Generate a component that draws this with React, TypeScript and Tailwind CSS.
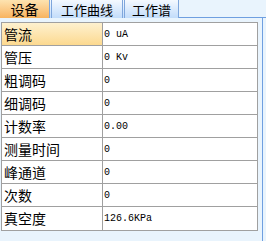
import React from "react";

const rows: [string, string][] = [
  ["管流", "0 uA"],
  ["管压", "0 Kv"],
  ["粗调码", "0"],
  ["细调码", "0"],
  ["计数率", "0.00"],
  ["测量时间", "0"],
  ["峰通道", "0"],
  ["次数", "0"],
  ["真空度", "126.6KPa"],
];

export default function App() {
  return (
    <div
      className="w-[266px] h-[241px] bg-[#e9f4fd] overflow-hidden flex flex-col"
      style={{ fontFamily: '"Noto Sans CJK SC", sans-serif' }}
    >
      <div className="flex h-[18px] shrink-0">
        <div className="w-[49px] h-[18px] bg-gradient-to-b from-[#fde3b0] to-[#f8b35e] flex items-center justify-center text-[14px] text-black leading-none">
          设备
        </div>
        <div className="w-[73px] h-[18px] border-l-[3px] border-double border-[#7ea6dc] bg-gradient-to-b from-[#f4f9ff] to-[#c2dcfa] flex items-center justify-center text-[13px] text-black leading-none">
          工作曲线
        </div>
        <div className="w-[57px] h-[18px] border-l-[3px] border-r border-double border-[#7ea6dc] bg-gradient-to-b from-[#f4f9ff] to-[#c2dcfa] flex items-center justify-center text-[13px] text-black leading-none">
          工作谱
        </div>
        <div className="flex-1 border-b border-[#6f9fe0]" />
      </div>
      <div className="w-[263px] flex-1 border-r border-[#6f9fe0] pt-[4px] pl-[1px] pr-[4px]">
        <div className="border border-[#a0a0a0] bg-white">
          {rows.map(([k, v], i) => (
            <div
              key={k}
              className={`flex h-[23px] ${i < rows.length - 1 ? "border-b border-[#a0a0a0]" : ""}`}
            >
              <div
                className={`w-[101px] border-r border-[#a0a0a0] flex items-center pl-[2px] text-[14px] text-black ${
                  i === 0 ? "bg-gradient-to-b from-[#fef1cf] to-[#fcd98f]" : ""
                }`}
              >
                {k}
              </div>
              <div
                className="flex-1 flex items-center pl-[1px] text-[10px] text-black"
                style={{ fontFamily: '"Liberation Mono", monospace' }}
              >
                {v}
              </div>
            </div>
          ))}
        </div>
      </div>
    </div>
  );
}
